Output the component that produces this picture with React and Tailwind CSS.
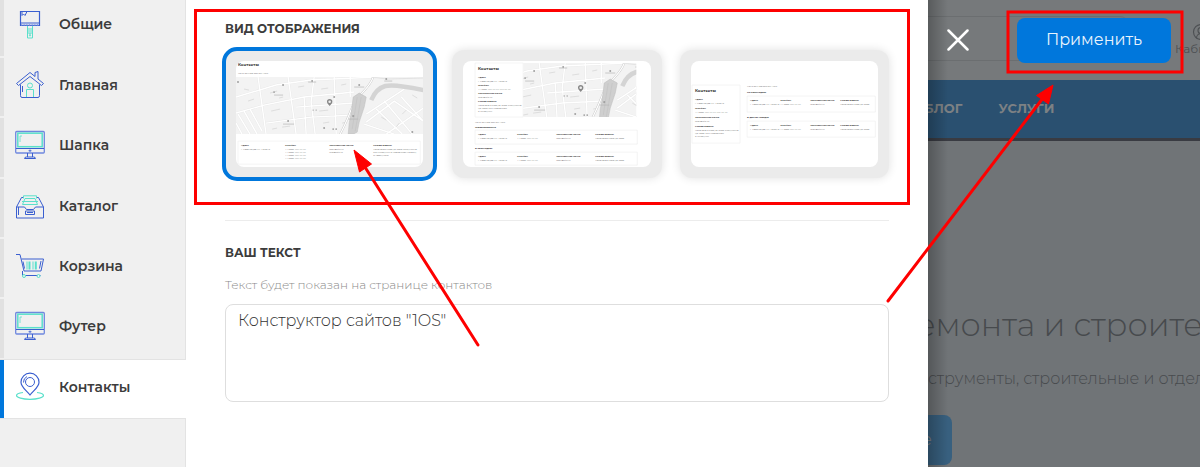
import React, { useState } from "react";
import { CircleUserRound } from "lucide-react";

const BLUE = "#3a5fd0";
const MINT = "#5be0cb";

const BrushIcon = () => (
  <svg viewBox="0 0 30 30" className="w-[30px] h-[30px] shrink-0" fill="none" stroke={BLUE}>
    <path d="M5.500 2.500h19v14h-19z" strokeWidth="1.200" />
    <path d="M5.500 14h19" />
    <path d="M6 15.500h18" strokeWidth="2" stroke="#8ea3e6" strokeDasharray="1 .6" />
    <path d="M7 3v3.500l1.500-1.500 1.500 1.500 2-4" strokeWidth="1" />
    <path d="M12.500 17v12h5V17M14 19v6h2v-6" stroke={MINT} />
    <circle cx="15" cy="26.500" r=".6" stroke={MINT} />
  </svg>
);

const HouseIcon = () => (
  <svg viewBox="0 0 30 30" className="w-[30px] h-[30px] shrink-0" fill="none" stroke={BLUE} strokeLinejoin="round">
    <path d="M1.500 13.500L15 2.500l5 4V2.500l3-1v7.500l5.500 4.500-2 2L15 6.500 3.500 15.500z" />
    <path d="M5.500 14.500v11q0 2 1.500 2h16q1.500 0 1.500-2v-11M7.500 16v6" />
    <path d="M11.500 27v-7.500h7V27" stroke={MINT} />
    <circle cx="15" cy="15.500" r="2.500" stroke={MINT} />
  </svg>
);

const MonitorIcon = () => (
  <svg viewBox="0 0 30 30" className="w-[30px] h-[30px] shrink-0" fill="none" stroke={BLUE}>
    <rect x=".7" y="1.500" width="28.600" height="21.500" rx="1" stroke="#6f88de" strokeWidth="1.300" />
    <path d="M1 18.500h28" />
    <rect x="2.800" y="3.200" width="24.400" height="13.500" stroke={MINT} strokeWidth="1.500" />
    <path d="M5 6v6M5 6h2" stroke={MINT} strokeWidth=".8" />
    <path d="M13.500 20.700h3M15 19.500v2.500" strokeWidth=".8" />
    <path d="M12.500 23v4M17.500 23v4M9.500 28.500q0-1.500 2-1.500h7q2 0 2 1.500z" />
  </svg>
);

const CatalogIcon = () => (
  <svg viewBox="0 0 30 30" className="w-[30px] h-[30px] shrink-0" fill="none" stroke={BLUE} strokeLinejoin="round">
    <path d="M7.500 13.500L10 7.500h10l2.500 6zM8.500 7.500V4.800h13v2.700M7 10.500h16" stroke={MINT} />
    <path d="M1.500 16v11h27V16M1.500 16L6.500 6.500h1.500M28.500 16l-5-9.500H22M3.500 24v-8M1.500 16h8l2 2.500h7l2-2.500h8" />
    <path d="M10.500 20h9v3.500h-9zM12 21.500h6" />
  </svg>
);

const CartIcon = () => (
  <svg viewBox="0 0 30 30" className="w-[30px] h-[30px] shrink-0" fill="none" stroke={BLUE} strokeLinejoin="round">
    <path d="M1 3.500h4l4 16.500h17l2.500-12h-22M7.500 20v4.500h18M8 10.500l1.500 7M26 10l-1.500 7.500" />
    <path d="M12 10.500v8M18 10.500v8" stroke={MINT} />
    <path d="M14.500 10.500v8M20.800 10.500v8" stroke={MINT} strokeWidth="2" />
    <circle cx="9" cy="25" r="1.500" stroke={MINT} fill="#f0f0f0" />
    <circle cx="23.500" cy="25" r="1.500" stroke={MINT} fill="#f0f0f0" />
  </svg>
);

const PinIcon = () => (
  <svg viewBox="0 0 30 30" className="w-[30px] h-[30px] shrink-0" fill="none" stroke={BLUE}>
    <path d="M8 20.500c-4 .5-6.500 1.700-6.500 3 0 2 6 3.800 13.500 3.800s13.500-1.800 13.500-3.800c0-1.300-2.500-2.500-6.500-3" stroke={MINT} strokeWidth="1.200" />
    <path d="M15 23C11 18 6 15 6 10.200a9 9 0 0 1 18 0C24 15 19 18 15 23z" strokeWidth="1.200" />
    <circle cx="15" cy="10" r="4.500" />
    <path d="M8.500 10.500a6.500 6.500 0 0 1 3.500-6" />
  </svg>
);

const menu = [
  { id: "common", label: "Общие", Icon: BrushIcon },
  { id: "main", label: "Главная", Icon: HouseIcon },
  { id: "header", label: "Шапка", Icon: MonitorIcon },
  { id: "catalog", label: "Каталог", Icon: CatalogIcon },
  { id: "cart", label: "Корзина", Icon: CartIcon },
  { id: "footer", label: "Футер", Icon: MonitorIcon },
  { id: "contacts", label: "Контакты", Icon: PinIcon },
];

// City map, 187 x 57
const CityMap = () => (
  <g fill="none">
    <path d="M0 0h187v57H0z" fill="#f3f3f3" />
    <g stroke="#e6e6e6" strokeWidth="2">
      <path d="M0 20L40 8 75 3 140 0M0 36l28-8 40-8 50-5M22 0l8 57M52 0l8 57M78 0l-3 25 4 32M98 0l2 57M68 20l2 37M30 46l45-6 40-2M60 30l58-4M114 0v20" />
      <path d="M2 37l12 20M8 34l13 23M14 32l12 22M0 46l6 11M128 47l30 10M130 37l38-25M140 32l26 25M150 57l37-26M148 24l28 33M130 45l28-21 29 20M165 20l22 24" />
    </g>
    <g stroke="#fff" strokeWidth="1.400">
      <path d="M0 20L40 8 75 3 140 0M0 36l28-8 40-8 50-5M22 0l8 57M52 0l8 57M78 0l-3 25 4 32M98 0l2 57M68 20l2 37M30 46l45-6 40-2M60 30l58-4M114 0v20" />
      <path d="M2 37l12 20M8 34l13 23M14 32l12 22M0 46l6 11M128 47l30 10M130 37l38-25M140 32l26 25M150 57l37-26M148 24l28 33M130 45l28-21 29 20M165 20l22 24" />
    </g>
    <path d="M8 12l5 1M12 24l6-2M34 16l7-2M35 34l9-2M43 21l4-1M62 10l6-1M85 12l7-1M83 34l9-1M87 46l6-1M105 8l5-1M106 46l5-1M46 50l8-1M36 52l5-1M145 40l5 3M166 37l4-4M176 18l5 3M160 50l3-4" stroke="#dadada" strokeWidth=".9" />
    <path d="M137 0C133 12 122 17 117 28S110 46 104 57" stroke="#c4c4c4" strokeWidth="2" />
    <path d="M137 0C133 12 122 17 117 28S110 46 104 57" stroke="#fff" strokeWidth="1.200" />
    <path d="M117 20l6-4 7 4-2 10-5 15-2 10-4 2h-5l1-11 2-10z" fill="#cfcfcf" stroke="#bdbdbd" strokeWidth=".5" />
    <path d="M121 20l-5 32M125 20l-6 34" stroke="#bcbcbc" strokeWidth=".4" />
    <path d="M135 23c3-7 7-12 14-14s24 1 38 4" stroke="#d4d4d4" strokeWidth="4.500" />
    <path d="M135 0l16 2 36-1" stroke="#ddd" strokeWidth=".8" />
    <g fill="#a0a0a0">
      <circle cx="2" cy="5" r="1" /><circle cx="38" cy="15" r=".9" /><circle cx="47" cy="8" r="1" />
      <circle cx="76" cy="4" r="1" /><circle cx="98" cy="20" r="1" /><circle cx="77" cy="33" r=".7" />
      <circle cx="80" cy="33" r=".7" /><circle cx="52" cy="44" r="1" /><circle cx="88" cy="51" r="1" />
      <circle cx="97" cy="52" r=".9" /><circle cx="100" cy="52" r=".9" /><circle cx="117" cy="39" r="1.100" />
      <circle cx="123" cy="8" r="1" /><circle cx="150" cy="2" r="1" /><circle cx="176" cy="55" r="1" />
    </g>
    <path d="M47 47h11M112 42h10M38 18h9M72 5h8M118 10h10M148 4h8" stroke="#b4b4b4" strokeWidth=".7" />
    <path d="M93.500 29c-1-1.500-2.700-2.600-2.700-4.300a2.700 2.700 0 0 1 5.400 0c0 1.700-1.700 2.800-2.700 4.300z" fill="#888" />
    <circle cx="93.500" cy="24.700" r="1.300" fill="#eee" />
  </g>
);

const Lines = ({ x, y, title, rows }) => (
  <g>
    <text x={x} y={y} fontWeight="700" fill="#333">{title}</text>
    {rows.map((row, i) => (
      <text key={i} x={x} y={y + 4 + i * 3} fill="#555">{row}</text>
    ))}
  </g>
);

const address = ["г. Краснодар, ул. Тихая 8"];
const phones = ["+7 (800) 555-55-55"];
const mail = ["mail@site.ru"];
const hours = ["Работаем с 9:00 до 18:00, ежедневно", "до 18:00, без перерывов", "и выходных"];

const OfficeRow = ({ x, y, step, width, height }) => (
  <g>
    <path d={`M${x} ${y}h${width}v${height}h${-width}z`} fill="none" stroke="#ededed" strokeWidth=".6" />
    <Lines x={x + 3} y={y + 5} title="Адрес" rows={address} />
    <Lines x={x + 3 + step} y={y + 5} title="Телефон" rows={phones} />
    <Lines x={x + 3 + step * 2} y={y + 5} title="Электронная почта" rows={mail} />
    <Lines x={x + 3 + step * 3} y={y + 5} title="Режим работы" rows={["Работаем с 9:00 до 18:00"]} />
  </g>
);

const WideMapPreview = () => (
  <>
    <text x="2" y="5" fontSize="4" fontWeight="700" fill="#333">Контакты</text>
    <text x="2" y="13" fill="#666">Конструктор сайтов "1OS"</text>
    <svg x="0" y="16" width="187" height="57" viewBox="0 0 187 57"><CityMap /></svg>
    <path d="M2 80h182v23H2z" fill="none" stroke="#eee" strokeWidth=".6" />
    <Lines x={5} y={85} title="Адрес" rows={address} />
    <Lines x={49} y={85} title="Телефон" rows={[phones[0], phones[0], phones[0], phones[0]]} />
    <Lines x={93} y={85} title="Электронная почта" rows={["mail@site.ru", "info@site.ru"]} />
    <Lines x={137} y={85} title="Режим работы" rows={["Работаем с 9:00 до 18:00, ежедневно,", "без выходных и перерывов на обед", "и праздники"]} />
  </>
);

const SideMapPreview = () => (
  <>
    <path d="M12 2h48v54H12z" fill="none" stroke="#eee" strokeWidth=".6" />
    <text x="15" y="9" fontSize="4" fontWeight="700" fill="#333">Контакты</text>
    <Lines x={15} y={17} title="Адрес" rows={address} />
    <Lines x={15} y={25} title="Телефон" rows={["+7 (800) 555-55-55, 555-55-55"]} />
    <Lines x={15} y={33} title="Электронная почта" rows={mail} />
    <Lines x={15} y={41} title="Режим работы" rows={hours} />
    <svg x="60" y="2" width="113" height="54" viewBox="36 0 113 54"><CityMap /></svg>
    <text x="12" y="62" fill="#666">Конструктор сайтов "1OS"</text>
    <text x="12" y="67" fontWeight="700" fill="#333">Территориально</text>
    <OfficeRow x={12} y={69} step={39} width={162} height={14} />
    <text x="12" y="88" fontWeight="700" fill="#333">В Краснодаре</text>
    <OfficeRow x={12} y={91} step={39} width={162} height={13} />
  </>
);

const TextPreview = () => (
  <>
    <path d="M1 24h48v58H1z" fill="none" stroke="#eee" strokeWidth=".6" />
    <text x="4" y="31" fontSize="4" fontWeight="700" fill="#333">Контакты</text>
    <Lines x={4} y={39} title="Адрес" rows={address} />
    <Lines x={4} y={48} title="Телефон" rows={["+7 (800) 555-55-55, 555-55-55"]} />
    <Lines x={4} y={57} title="Электронная почта" rows={mail} />
    <Lines x={4} y={66} title="Режим работы" rows={hours} />
    <text x="56" y="26" fill="#666">Конструктор сайтов "1OS"</text>
    <text x="56" y="32" fontWeight="700" fill="#333">По Краснодару</text>
    <OfficeRow x={56} y={35} step={30} width={128} height={16} />
    <text x="56" y="57" fontWeight="700" fill="#333">В других городах</text>
    <OfficeRow x={56} y={60} step={30} width={128} height={16} />
  </>
);

const views = [
  { id: "wide", label: "Карта на всю ширину", Preview: WideMapPreview },
  { id: "side", label: "Карта справа", Preview: SideMapPreview },
  { id: "text", label: "Без карты", Preview: TextPreview },
];

const Marks = () => (
  <svg
    width="1200"
    height="467"
    viewBox="0 0 1200 467"
    className="absolute left-0 top-0 max-w-none pointer-events-none"
    fill="none"
    stroke="#fe0000"
    strokeWidth="3"
    aria-hidden="true"
  >
    <rect x="195.500" y="10.500" width="713" height="193" />
    <rect x="1008" y="12" width="174" height="60" />
    <path d="M478 345L363 164M888 301l155-203" strokeLinecap="round" />
    <path d="M354 150l17.500 14-12 8zM1053 85l-4.500 19-12-8.500z" fill="#fe0000" strokeWidth="1" />
  </svg>
);

const App = () => {
  const [active, setActive] = useState("contacts");
  const [view, setView] = useState("wide");
  const [text, setText] = useState('Конструктор сайтов "1OS"');

  return (
    <div className="relative flex min-h-screen overflow-hidden bg-white font-['Montserrat','Inter',sans-serif] text-[#3c3c3c]">
      {/* Sections */}
      <nav className="w-[186px] shrink-0 bg-[#f0f0f0] border-r border-[#e3e3e3]">
        <div className="grid grid-rows-[56px_repeat(6,1fr)] gap-0.5 h-[418px]">
          {menu.map(({ id, label, Icon }) => (
            <button
              key={id}
              type="button"
              onClick={() => setActive(id)}
              className={
                active === id
                  ? "-mr-px flex items-center gap-3.5 pl-[11px] pb-1 border-l-4 border-[#0077dc] bg-white shadow-[0_0_0_1px_#e3e3e3] [clip-path:inset(-1px_0_-1px_0)] text-sm font-semibold text-left"
                  : "flex items-center gap-3.5 pl-[11px] pb-1 first:pb-2 border-l-4 border-[#e1e1e1] text-sm font-semibold text-left"
              }
            >
              <Icon />
              {label}
            </button>
          ))}
        </div>
      </nav>

      {/* Settings */}
      <main className="flex-1 min-w-0 px-[39px] pt-5">
        <fieldset>
          <legend className="text-xs leading-[18px] font-bold">ВИД ОТОБРАЖЕНИЯ</legend>
          <div className="grid grid-cols-3 gap-[18px] mt-3">
            {views.map(({ id, label, Preview }) => (
              <label
                key={id}
                className={
                  view === id
                    ? "p-[11px] rounded-xl bg-[#ebebeb] outline-4 -outline-offset-1 outline-[#0077dc] cursor-pointer"
                    : "p-[11px] rounded-xl bg-[#ebebeb] shadow-[0_0_10px_rgba(0,0,0,0.12)] cursor-pointer"
                }
              >
                <input
                  type="radio"
                  name="view"
                  aria-label={label}
                  checked={view === id}
                  onChange={() => setView(id)}
                  className="sr-only"
                />
                <svg viewBox="0 0 187 106" className="block w-full rounded-lg bg-white" fontSize="2.300">
                  <Preview />
                </svg>
              </label>
            ))}
          </div>
        </fieldset>

        <div className="mt-[42px] pt-[23px] border-t border-[#ececec]">
          <label htmlFor="text" className="block text-xs leading-[18px] font-bold">
            ВАШ ТЕКСТ
          </label>
          <p id="text-hint" className="mt-3.5 text-xs leading-[18px] font-light text-[#8c8c8c]">
            Текст будет показан на странице контактов
          </p>
          <textarea
            id="text"
            aria-describedby="text-hint"
            value={text}
            onChange={(e) => setText(e.target.value)}
            className="block w-full h-[98px] mt-2.5 px-3 py-1 rounded-lg border border-[#dedede] resize-none text-base font-light text-[#333] focus:outline-none"
          />
        </div>
      </main>

      {/* Dimmed shop page */}
      <aside className="relative w-[272px] shrink-0 overflow-hidden bg-[#707477] whitespace-nowrap">
        <div className="relative flex items-center h-20 pl-[19px] bg-[#76797b]">
          <div className="absolute left-0 top-4 w-[200px] h-[45px] rounded-r-lg border-y border-[#6b6e70]"></div>
          <button type="button" aria-label="Закрыть" className="relative z-10 shrink-0 mr-12">
            <svg viewBox="0 0 22 22" className="w-[22px] h-[22px]" stroke="#fff" strokeWidth="2.500" strokeLinecap="round">
              <path d="M1.500 1.500l19 19M20.500 1.500l-19 19" />
            </svg>
          </button>
          <button
            type="button"
            className="relative z-10 shrink-0 w-[154px] h-[45px] rounded-lg bg-[#0077dc] text-base font-normal text-[#e9f4fd]"
          >
            Применить
          </button>
          <a href="#cabinet" className="flex flex-col items-center shrink-0 ml-1 text-xs text-[#4d5053]">
            <CircleUserRound size={18} strokeWidth={1.5} />
            Кабинет
          </a>
        </div>
        <div className="flex items-center gap-9 h-[61px] bg-[#2a5070] border-b-3 border-[#393b42] text-[13px] font-bold text-[#7d8184]">
          <a href="#blog" className="-ml-1">БЛОГ</a>
          <a href="#services">УСЛУГИ</a>
        </div>
        <div className="pt-[164px]">
          <h2 className="-ml-3 text-[32px] leading-10 font-light text-[#474a4d]">емонта и строите</h2>
          <p className="mt-[22px] text-base leading-6 font-light text-[#484b4e]">струменты, строительные и отдел</p>
          <button type="button" className="w-6 h-[50px] mt-6 rounded-r-lg bg-[#38607f] text-left text-base text-[#7d8184]">
            <span className="-ml-1.5">е</span>
          </button>
        </div>
        <div className="absolute inset-y-0 left-0 w-5 bg-linear-to-r from-black/25 to-transparent"></div>
      </aside>

      <Marks />
    </div>
  );
};

export default App;
